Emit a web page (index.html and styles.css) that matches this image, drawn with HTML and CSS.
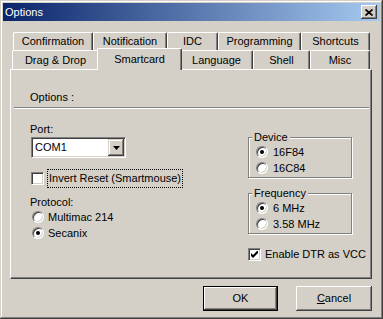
FILE: index.html
```html
<!DOCTYPE html>
<html>
<head>
<meta charset="utf-8">
<title>Options</title>
<link rel="stylesheet" href="styles.css">
</head>
<body>
<div class="window">
  <div class="titlebar">
    <span class="title">Options</span>
    <span class="close"><svg width="8" height="7" viewBox="0 0 8 7"><path d="M0.5 0.5 L7.5 6.5 M7.5 0.5 L0.5 6.5" stroke="#000" stroke-width="1.7" fill="none"/></svg></span>
  </div>
  <div class="body">
    <div class="tabs">
      <div class="tabrow row1">
        <div class="tab w-confirm">Confirmation</div>
        <div class="tab w-notify">Notification</div>
        <div class="tab w-idc">IDC</div>
        <div class="tab w-prog">Programming</div>
        <div class="tab w-short">Shortcuts</div>
      </div>
      <div class="tabrow row2">
        <div class="tab w-drag">Drag &amp; Drop</div>
        <div class="tab sel w-smart">Smartcard</div>
        <div class="tab w-lang">Language</div>
        <div class="tab w-shell">Shell</div>
        <div class="tab w-misc">Misc</div>
      </div>
    </div>
    <div class="panel">
      <div class="heading">Options :</div>
      <div class="rule"></div>
      <div class="cols">
        <div class="left">
          <div class="label label-port">Port:</div>
          <div class="combo">
            <span class="combo-text">COM1</span>
            <span class="combo-btn"><svg width="7" height="4" viewBox="0 0 7 4"><path d="M0 0H7L3.5 4Z" fill="#000"/></svg></span>
          </div>
          <div class="checkrow invert">
            <span class="check"></span>
            <span class="focus">Invert Reset (Smartmouse)</span>
          </div>
          <div class="label label-proto">Protocol:</div>
          <div class="radiorow proto"><span class="radio"></span><span>Multimac 214</span></div>
          <div class="radiorow proto"><span class="radio on"></span><span>Secanix</span></div>
        </div>
        <div class="right">
          <div class="group">
            <div class="legend">Device</div>
            <div class="radiorow grp"><span class="radio on"></span><span>16F84</span></div>
            <div class="radiorow grp"><span class="radio"></span><span>16C84</span></div>
          </div>
          <div class="group freq">
            <div class="legend">Frequency</div>
            <div class="radiorow grp"><span class="radio on"></span><span>6 MHz</span></div>
            <div class="radiorow grp"><span class="radio"></span><span>3.58 MHz</span></div>
          </div>
          <div class="checkrow dtr">
            <span class="check"><svg width="7" height="7" viewBox="0 0 7 7"><polygon points="0,2 2,4 6,0 7,0 7,2 2,7 0,5" fill="#000"/></svg></span>
            <span>Enable DTR as VCC</span>
          </div>
        </div>
      </div>
    </div>
    <div class="buttons">
      <button class="btn default">OK</button>
      <button class="btn cancel"><u>C</u>ancel</button>
    </div>
  </div>
</div>
</body>
</html>
```
FILE: styles.css
```css
* { box-sizing: border-box; }
html, body { margin: 0; padding: 0; }
body {
  width: 383px;
  height: 319px;
  overflow: hidden;
  background: #d4d0c8;
  color: #000;
  font-family: "Liberation Sans", Arial, sans-serif;
  font-size: 11px;
  line-height: 13px;
}
.window {
  width: 383px;
  height: 319px;
  padding: 3px;
  background: #d4d0c8;
  box-shadow: inset -1px -1px #404040, inset 1px 1px #d4d0c8, inset -2px -2px #808080, inset 2px 2px #fff;
  display: flex;
  flex-direction: column;
}
.titlebar {
  height: 18px;
  flex: none;
  background: linear-gradient(to right, #0a246a, #a6caf0);
  display: flex;
  align-items: center;
  justify-content: space-between;
  padding: 0 3px 0 2px;
}
.title { color: #fff; font-size: 11px; }
.close {
  width: 16px;
  height: 14px;
  background: #d4d0c8;
  box-shadow: inset -1px -1px #404040, inset 1px 1px #fff, inset -2px -2px #808080;
  display: flex;
  align-items: center;
  justify-content: center;
}
.close svg { display: block; }
.body {
  flex: 1;
  display: flex;
  flex-direction: column;
  padding: 11px 8px 0 7px;
}
.tabs { height: 37px; display: flex; flex-direction: column; flex: none; }
.tabrow { display: flex; height: 18px; }
.row1 { margin-left: 3px; }
.row2 { margin-left: 2px; height: 19px; }
.tab {
  height: 100%;
  background: #d4d0c8;
  border-top: 1px solid #fff;
  border-left: 1px solid #fff;
  border-right: 1px solid #404040;
  box-shadow: inset -1px 0 #808080;
  border-radius: 2px 2px 0 0;
  display: flex;
  align-items: center;
  justify-content: center;
  white-space: nowrap;
  flex: none;
}
.tab.sel {
  height: 22px;
  margin: -2px -2px -1px;
  position: relative;
  z-index: 1;
}
.w-confirm { width: 80px; }
.w-notify { width: 74px; }
.w-idc { width: 51px; }
.w-prog { width: 83px; }
.w-short { width: 69px; }
.w-drag { width: 87px; }
.w-smart { width: 85px; }
.w-lang { width: 73px; }
.w-shell { width: 57px; }
.w-misc { width: 60px; }
.panel {
  height: 210px;
  flex: none;
  border-top: 1px solid #fff;
  border-left: 1px solid #fff;
  border-right: 1px solid #404040;
  border-bottom: 1px solid #404040;
  box-shadow: inset -1px -1px #808080;
}
.heading { margin: 21px 0 0 19px; }
.rule {
  height: 2px;
  margin: 3px 2px 0 3px;
  border-top: 1px solid #808080;
  border-bottom: 1px solid #fff;
}
.cols {
  display: grid;
  grid-template-columns: 217px 104px;
  padding-left: 20px;
}
.label { margin-left: -1px; }
.label-port { margin-top: 14px; }
.combo {
  margin-top: 1px;
  width: 95px;
  height: 21px;
  background: #fff;
  border: 1px solid;
  border-color: #808080 #fff #fff #808080;
  box-shadow: inset 1px 1px #404040, inset -1px -1px #d4d0c8;
  display: flex;
  align-items: center;
  justify-content: space-between;
  padding: 1px;
}
.combo-text { padding-left: 2px; }
.combo-btn {
  width: 16px;
  height: 17px;
  background: #d4d0c8;
  box-shadow: inset -1px -1px #404040, inset 1px 1px #d4d0c8, inset -2px -2px #808080, inset 2px 2px #fff;
  display: flex;
  align-items: center;
  justify-content: center;
}
.combo-btn svg { display: block; }
.checkrow { display: flex; align-items: center; white-space: nowrap; }
.invert { margin-top: 11px; height: 18px; gap: 3px; }
.focus {
  border: 1px dotted #000;
  padding: 2px 1px;
  line-height: 13px;
}
.check {
  width: 13px;
  height: 13px;
  flex: none;
  background: #fff;
  border: 1px solid;
  border-color: #808080 #fff #fff #808080;
  box-shadow: inset 1px 1px #404040, inset -1px -1px #d4d0c8;
  display: flex;
  align-items: center;
  justify-content: center;
}
.check svg { display: block; }
.label-proto { margin-top: 9px; }
.radiorow { display: flex; align-items: center; height: 16px; white-space: nowrap; }
.proto { margin-left: 1px; gap: 4px; }
.grp { margin-left: 7px; gap: 5px; }
.radio {
  width: 12px;
  height: 12px;
  flex: none;
  border-radius: 50%;
  background: #fff;
  border: 1px solid;
  border-color: #808080 #fff #fff #808080;
  box-shadow: inset 1px 1px #404040, inset -1px -1px #d4d0c8;
  position: relative;
}
.radio.on::after {
  content: "";
  position: absolute;
  left: 3px;
  top: 3px;
  width: 4px;
  height: 4px;
  border-radius: 50%;
  background: #000;
}
.right { padding-top: 28px; }
.group {
  width: 104px;
  border: 1px solid #808080;
  box-shadow: inset 1px 1px #fff, 1px 1px #fff;
  padding-bottom: 1px;
}
.freq { margin-top: 15px; }
.legend {
  margin: -7px 0 0 3px;
  padding: 0 2px;
  width: fit-content;
  background: #d4d0c8;
}
.dtr { margin-top: 13px; height: 14px; gap: 4px; }
.buttons {
  display: flex;
  justify-content: flex-end;
  gap: 18px;
  margin-top: 7px;
}
.btn {
  width: 75px;
  height: 25px;
  padding: 0;
  border: none;
  background: #d4d0c8;
  font: inherit;
  color: #000;
  box-shadow: inset -1px -1px #404040, inset 1px 1px #fff, inset -2px -2px #808080, inset 2px 2px #d4d0c8;
}
.btn.default {
  border: 1px solid #000;
}
.btn.cancel { width: 76px; }
```
